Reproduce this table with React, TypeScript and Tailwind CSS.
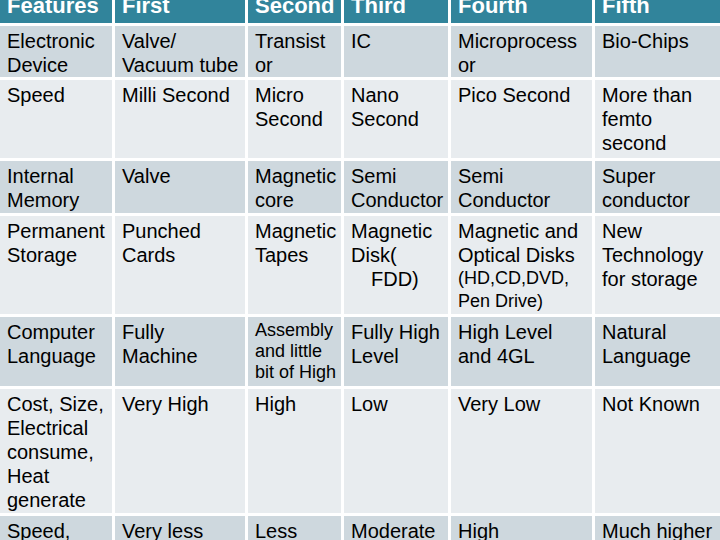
import React from "react";

type Cell = { lines: (string | { t: string; cls: string })[] };

const header = ["Features", "First", "Second", "Third", "Fourth", "Fifth"];

const rows: { h: string; cells: (string | { t: string; cls: string })[][] }[] = [
  {
    h: "h-[51px]",
    cells: [
      ["Electronic", "Device"],
      ["Valve/", "Vacuum tube"],
      ["Transist", "or"],
      ["IC"],
      ["Microprocess", "or"],
      ["Bio-Chips"],
    ],
  },
  {
    h: "h-[78px]",
    cells: [
      ["Speed"],
      ["Milli Second"],
      ["Micro", "Second"],
      ["Nano", "Second"],
      ["Pico Second"],
      ["More than", "femto", "second"],
    ],
  },
  {
    h: "h-[52px]",
    cells: [
      ["Internal", "Memory"],
      ["Valve"],
      ["Magnetic", "core"],
      ["Semi", "Conductor"],
      ["Semi", "Conductor"],
      ["Super", "conductor"],
    ],
  },
  {
    h: "h-[98px]",
    cells: [
      ["Permanent", "Storage"],
      ["Punched", "Cards"],
      ["Magnetic", "Tapes"],
      ["Magnetic", "Disk(", { t: "FDD)", cls: "pl-[20px]" }],
      [
        "Magnetic and",
        "Optical Disks",
        { t: "(HD,CD,DVD,", cls: "text-[18px] leading-[23px]" },
        { t: "Pen Drive)", cls: "text-[18px] leading-[22px]" },
      ],
      ["New", "Technology", "for storage"],
    ],
  },
  {
    h: "h-[69px]",
    cells: [
      ["Computer", "Language"],
      ["Fully", "Machine"],
      [
        { t: "Assembly", cls: "text-[18px] leading-[21px]" },
        { t: "and little", cls: "text-[18px] leading-[21px]" },
        { t: "bit of High", cls: "text-[18px] leading-[21px]" },
      ],
      ["Fully High", "Level"],
      ["High Level", "and 4GL"],
      ["Natural", "Language"],
    ],
  },
  {
    h: "h-[124px]",
    cells: [
      ["Cost, Size,", "Electrical", "consume,", "Heat", "generate"],
      ["Very High"],
      ["High"],
      ["Low"],
      ["Very Low"],
      ["Not Known"],
    ],
  },
  {
    h: "h-[60px]",
    cells: [
      ["Speed,"],
      ["Very less"],
      ["Less"],
      ["Moderate"],
      ["High"],
      ["Much higher"],
    ],
  },
];

export default function App() {
  return (
    <div
      className="w-[720px] h-[540px] overflow-hidden bg-white"
      style={{ fontFamily: '"Liberation Sans", Arial, sans-serif' }}
    >
      <div className="-mt-[10px] grid grid-cols-[112px_130px_93px_104px_141px_1fr] gap-[3px] bg-white">
        {header.map((h) => (
          <div
            key={h}
            className="h-[33px] bg-[#31849b] pl-[7px] pt-[3px] text-[22px] leading-[26px] font-bold text-white whitespace-nowrap"
          >
            {h}
          </div>
        ))}
        {rows.map((r, ri) => (
          <React.Fragment key={ri}>
            {r.cells.map((c, ci) => (
              <div
                key={ci}
                className={`${r.h} ${
                  ri % 2 === 0 ? "bg-[#ced8de]" : "bg-[#e8ecef]"
                } pl-[7px] pt-[3px] text-[20px] leading-[24px] text-black whitespace-nowrap overflow-hidden`}
              >
                {c.map((l, li) =>
                  typeof l === "string" ? (
                    <div key={li}>{l}</div>
                  ) : (
                    <div key={li} className={l.cls}>
                      {l.t}
                    </div>
                  )
                )}
              </div>
            ))}
          </React.Fragment>
        ))}
      </div>
    </div>
  );
}
